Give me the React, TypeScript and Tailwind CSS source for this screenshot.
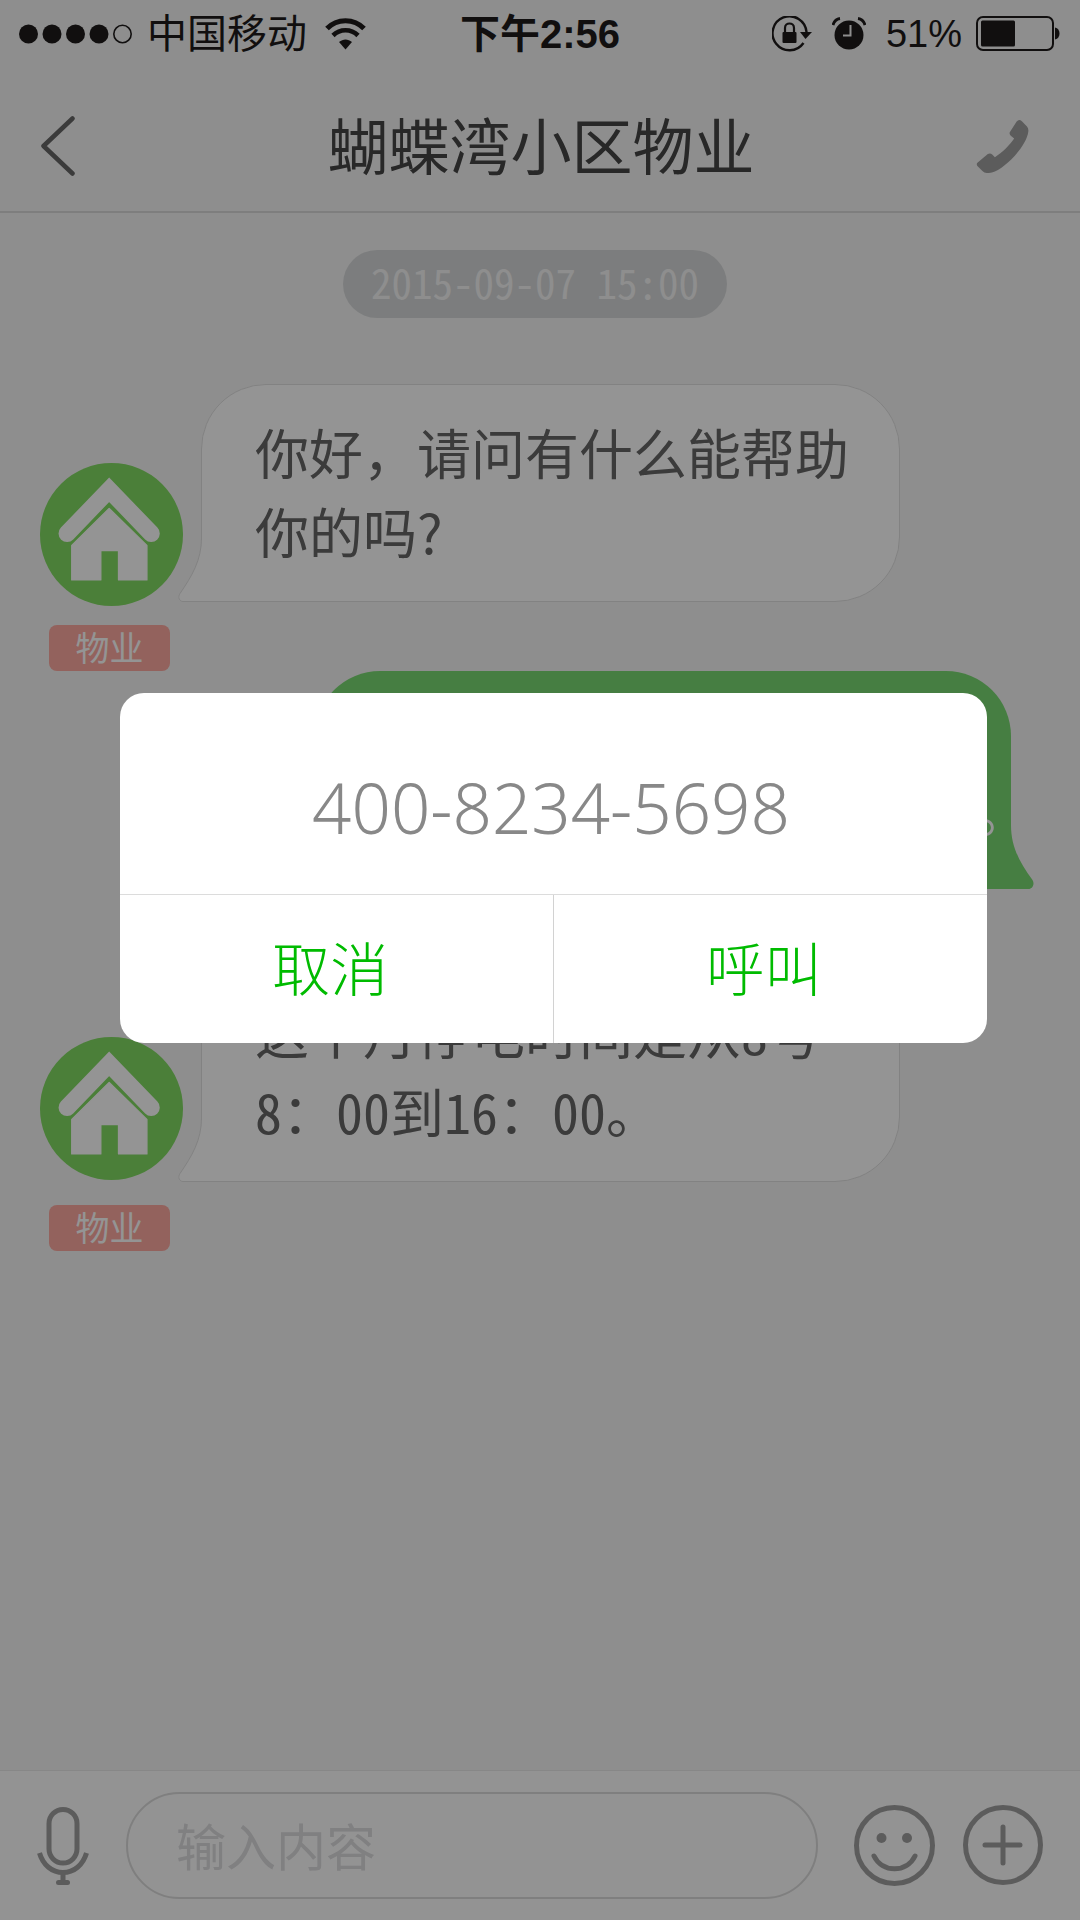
import { useState } from "react";

type Message = {
  id: string;
  from: "estate" | "me";
  lines: string[];
  avatarClass?: string;
};

const MESSAGES: Message[] = [
  {
    id: "msg_001",
    from: "estate",
    lines: ["你好，请问有什么能帮助", "你的吗?"],
    avatarClass: "gap-[19px] pt-[79px]",
  },
  {
    id: "msg_002",
    from: "me",
    lines: ["。"],
  },
  {
    id: "msg_003",
    from: "estate",
    lines: ["这个月停电时间是从8号", "8：00到16：00。"],
    avatarClass: "gap-[25px] pt-[73px]",
  },
];

// half-width digits line up with the full-width characters around them
function lineUI(line: string) {
  if (/\d/.test(line)) return "block whitespace-nowrap [font-feature-settings:'hwid']";
  return "block whitespace-nowrap";
}

function StatusBar() {
  return (
    <div className="grid h-[68px] grid-cols-[1fr_auto_1fr] items-center px-[19px] font-['Liberation_Sans','Noto_Sans_CJK_SC',sans-serif] text-[40px] leading-none text-[#1e1b1b]">
      <div className="flex items-center">
        <svg width="114" height="20" viewBox="0 0 114 20" fill="currentColor">
          <circle cx="9.5" cy="10" r="9.5" />
          <circle cx="33" cy="10" r="9.5" />
          <circle cx="56.5" cy="10" r="9.5" />
          <circle cx="80" cy="10" r="9.5" />
          <circle cx="103.5" cy="10" r="8.7" fill="none" stroke="currentColor" strokeWidth="1.6" />
        </svg>
        <span className="ml-[14px]">中国移动</span>
        <svg className="ml-[18px]" width="41" height="32" viewBox="0 0 41 32" fill="none" stroke="currentColor">
          <path d="M2 10.5C12 0 29 0 39 10.5" strokeWidth="5" />
          <path d="M8 17.5C15 10.5 26 10.5 33 17.5" strokeWidth="4.6" />
          <path d="M14 24C18 20.5 23 20.5 27 24L20.5 31.5Z" fill="currentColor" stroke="none" />
        </svg>
      </div>

      <span className="font-bold">下午2:56</span>

      <div className="flex items-center justify-end">
        <svg width="40" height="36" viewBox="0 0 40 36" fill="none" stroke="currentColor">
          <path d="M31.5 27A17 17 0 1 1 34.5 16" strokeWidth="2.4" />
          <path d="M28 16H40L33.5 23Z" fill="currentColor" stroke="none" />
          <rect x="10.5" y="16" width="14" height="11" rx="1" fill="currentColor" stroke="none" />
          <path d="M13 17V12C13 6 22 6 22 12V17" strokeWidth="2.2" />
        </svg>
        <svg className="ml-[20px]" width="34" height="34" viewBox="0 0 34 34" fill="none">
          <circle cx="17" cy="18" r="14.5" fill="currentColor" />
          <path d="M1 8C2 4.5 4.5 2 8 1.5M33 8C32 4.5 29.5 2 26 1.5" stroke="currentColor" strokeWidth="2.8" />
          <path d="M18.5 8V18.5H11" stroke="#f5f5f5" strokeWidth="2" />
        </svg>
        <span className="ml-[20px] text-[38px]">51%</span>
        <svg className="ml-[14px]" width="85" height="36" viewBox="0 0 85 36">
          <rect x="1" y="1" width="76" height="33" rx="6" fill="none" stroke="currentColor" strokeWidth="2" />
          <rect x="5" y="4.5" width="34" height="26" rx="1.5" fill="currentColor" />
          <path d="M79 11.5C85 12 85 23 79 23.5Z" fill="currentColor" />
        </svg>
      </div>
    </div>
  );
}

function HouseAvatar() {
  return (
    <svg width="143" height="143" viewBox="0 0 428 428">
      <circle cx="214" cy="214" r="214" fill="#81db62" />
      <path
        d="M81 211L207 80L333 211"
        fill="none"
        stroke="#fff"
        strokeWidth="51"
        strokeLinecap="round"
      />
      <path
        d="M207 136L320 247V350H235V262H182V350H95V247Z"
        fill="#fff"
        stroke="#fff"
        strokeWidth="4"
        strokeLinejoin="round"
      />
    </svg>
  );
}

function EstateMessage({ message }: { message: Message }) {
  return (
    <li className="flex items-start">
      <div className={`flex w-[143px] flex-col items-center ${message.avatarClass}`}>
        <HouseAvatar />
        <span className="mr-[4px] h-[46px] w-[121px] rounded-lg bg-[#fda9a0] text-center text-[34px] leading-[44px] text-white">
          物业
        </span>
      </div>

      <div className="relative ml-[18px] w-[699px] rounded-[65px] rounded-bl-none border border-[#e0e0e0] bg-white pt-[27px] pb-[31px] pl-[53px]">
        <svg
          className="absolute -bottom-px -left-[24px]"
          width="27"
          height="64"
          viewBox="0 0 27 64"
        >
          <path d="M23.5 0C23.5 22 14 38 2 55.5C-.5 59 1.5 63.5 5 63.5H27V0Z" fill="#fff" />
          <path
            d="M23.5 0C23.5 22 14 38 2 55.5C-.5 59 1.5 63.5 5 63.5H27"
            fill="none"
            stroke="#e0e0e0"
          />
        </svg>
        <p className="text-[54px] leading-[79px] text-[#666]">
          {message.lines.map((line) => (
            <span key={line} className={lineUI(line)}>
              {line}
            </span>
          ))}
        </p>
      </div>
    </li>
  );
}

function MyMessage({ message }: { message: Message }) {
  return (
    <li className="mr-[69px] mb-[75px] flex justify-end">
      <div className="relative flex h-[218px] w-[696px] items-end justify-end rounded-[65px] rounded-br-none bg-[#79d972] pb-[40px]">
        <svg className="absolute -right-[23px] bottom-0" width="24" height="64" viewBox="0 0 24 64">
          <path d="M1 0C1 22 10 38 22.5 55C25 59 22.5 64 18.5 64H0V0Z" fill="#79d972" />
        </svg>
        <p className="-mr-[18px] text-[54px] leading-[79px] text-white">
          {message.lines.map((line) => (
            <span key={line} className={lineUI(line)}>
              {line}
            </span>
          ))}
        </p>
      </div>
    </li>
  );
}

function CallDialog({ phone, onClose }: { phone: string; onClose: () => void }) {
  return (
    <div className="fixed inset-0 flex items-start bg-black/42 pt-[693px] pr-[93px] pl-[120px]">
      <div
        role="dialog"
        aria-modal="true"
        aria-label={phone}
        className="w-full overflow-hidden rounded-3xl bg-white"
      >
        <p className="flex h-[202px] items-center justify-center border-b border-[#dcdcdc] pt-[28px] pr-[5px] font-['Noto_Sans',sans-serif] text-[69px] leading-none font-light text-[#888]">
          {phone}
        </p>
        <div className="grid grid-cols-2 text-[58px] leading-none font-light text-[#00bb00]">
          <button type="button" onClick={onClose} className="h-[148px] border-r border-[#d2d2d2] pr-[12px] pb-[6px]">
            取消
          </button>
          <button type="button" onClick={onClose} className="h-[148px] pr-[12px] pb-[6px]">
            呼叫
          </button>
        </div>
      </div>
    </div>
  );
}

export default function App() {
  const [draft, setDraft] = useState("");
  const [calling, setCalling] = useState(true);

  return (
    <div className="flex min-h-screen flex-col bg-[#f5f5f5] font-['Noto_Sans_CJK_SC',sans-serif]">
      <StatusBar />

      <header className="flex h-[145px] items-center justify-between border-b-2 border-[#dadada] pt-[13px] pr-[51px] pl-[41px]">
        <button type="button" aria-label="返回" className="w-[65px]">
          <svg width="34" height="60" viewBox="0 0 34 60" fill="none" stroke="#666" strokeWidth="4.5" strokeLinecap="round" strokeLinejoin="round">
            <path d="M31.5 2.5L2.5 30L31.5 57.5" />
          </svg>
        </button>
        <h1 className="pb-[5px] text-[61px] leading-none text-[#454545]">蝴蝶湾小区物业</h1>
        <button type="button" aria-label="电话" onClick={() => setCalling(true)}>
          <svg width="53" height="53" viewBox="0 0 153 157" fill="#9f9f9f">
            <path d="M126 0Q130 0 134 4L149 19Q154 24 153 34C149 68 112 112 80 136C62 151 45 157 30 157Q22 157 17 151L2 136Q-2 130 3 126L33 101Q40 97 46 102L54 110C75 98 100 72 111 55L101 47Q96 42 98 36L118 5Q122 0 126 0Z" />
          </svg>
        </button>
      </header>

      <main className="flex flex-1 flex-col pt-[37px]">
        <time className="mr-[10px] h-[68px] self-center rounded-full bg-[#d6d8d9] px-[28px] text-[41px] leading-[62px] whitespace-pre text-[#f5f5f5] [font-feature-settings:'hwid']">
          2015-09-07 15:00
        </time>

        <ul className="mt-[66px] pl-[40px]">
          {MESSAGES.map((message) =>
            message.from === "me" ? (
              <MyMessage key={message.id} message={message} />
            ) : (
              <EstateMessage key={message.id} message={message} />
            )
          )}
        </ul>
      </main>

      <footer className="flex h-[150px] items-center border-t border-[#e8e8e8] bg-[#fdfdfd] pr-[37px] pl-[37px]">
        <button type="button" aria-label="语音">
          <svg width="52" height="78" viewBox="0 0 52 78" fill="none" stroke="#9f9f9f" strokeWidth="5">
            <rect x="12" y="2.5" width="28" height="53.5" rx="14" />
            <path d="M2.5 46C6 58 15 65.5 26 65.5C37 65.5 46 58 49.5 46" />
            <path d="M26 65V74" />
            <path d="M21.5 75.5H30.5" strokeLinecap="round" />
          </svg>
        </button>
        <input
          type="text"
          aria-label="输入内容"
          placeholder="输入内容"
          value={draft}
          onChange={(e) => setDraft(e.target.value)}
          className="ml-[37px] h-[107px] min-w-0 flex-1 rounded-full border-2 border-[#dbdbdb] px-[48px] pb-[4px] text-[50px] text-[#666] outline-none placeholder:text-[#dcdcde]"
        />
        <button type="button" aria-label="表情" className="ml-[36px]">
          <svg width="81" height="81" viewBox="0 0 81 81" fill="none" stroke="#9f9f9f" strokeWidth="5" strokeLinecap="round">
            <circle cx="40.5" cy="40.5" r="38" />
            <path d="M20 51C28 68 53 68 61 51" />
            <circle cx="27.5" cy="33" r="5" fill="#9f9f9f" stroke="none" />
            <circle cx="53" cy="33" r="5" fill="#9f9f9f" stroke="none" />
          </svg>
        </button>
        <button type="button" aria-label="更多" className="ml-[28px]">
          <svg width="80" height="81" viewBox="0 0 80 81" fill="none" stroke="#9f9f9f" strokeWidth="5" strokeLinecap="round">
            <circle cx="40" cy="40" r="37.5" />
            <path d="M40 22V58M22 40H57" />
          </svg>
        </button>
      </footer>

      {calling && <CallDialog phone="400-8234-5698" onClose={() => setCalling(false)} />}
    </div>
  );
}
